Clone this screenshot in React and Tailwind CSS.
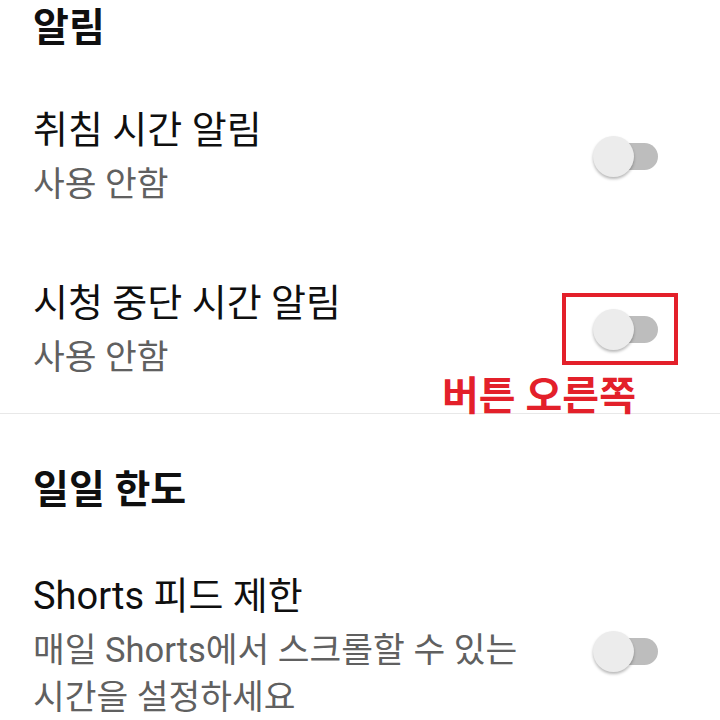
const font = { fontFamily: 'Roboto, "Noto Sans CJK KR", sans-serif' }

function Toggle({ className = '' }) {
  return (
    <div className={`relative h-[41px] w-[65px] shrink-0 ${className}`}>
      <div className="absolute right-0 top-[7px] h-[27px] w-[58px] rounded-full bg-[#bdbdbd]" />
      <div className="absolute left-0 top-0 h-[41px] w-[41px] rounded-full bg-[#ececec] shadow-[0_2px_3px_rgba(0,0,0,0.28)]" />
    </div>
  )
}

function SettingRow({ title, subtitle, className = '', toggleClass = '' }) {
  return (
    <div className={`flex items-center justify-between pl-[33px] pr-[62px] ${className}`}>
      <div className="min-w-0">
        <div className="text-[38px] leading-[52px] text-[#0f0f0f]">{title}</div>
        <div className="mt-[5px] max-w-[530px] break-keep text-[34.5px] leading-[47px] text-[#606060]">
          {subtitle}
        </div>
      </div>
      <Toggle className={toggleClass} />
    </div>
  )
}

function SectionTitle({ children }) {
  return (
    <h2 className="flex h-[56px] items-center pl-[33px] text-[39px] font-bold text-[#0f0f0f]">
      {children}
    </h2>
  )
}

export default function App() {
  return (
    <div className="relative h-[720px] w-[720px] overflow-hidden bg-white" style={font}>
      <section className="pb-[11px]">
        <SectionTitle>알림</SectionTitle>
        <SettingRow title="취침 시간 알림" subtitle="사용 안함" className="pt-[48px] pb-[21px]" />
        <SettingRow title="시청 중단 시간 알림" subtitle="사용 안함" className="pt-[48px] pb-[21px]" />
      </section>

      <div className="h-px bg-[#e8e8e8]" />

      <section className="pt-[48px]">
        <SectionTitle>일일 한도</SectionTitle>
        <SettingRow
          title="Shorts 피드 제한"
          subtitle="매일 Shorts에서 스크롤할 수 있는 시간을 설정하세요"
          className="pt-[52px]"
          toggleClass="mt-[12px]"
        />
      </section>

      {/* annotation overlay */}
      <div className="absolute left-[562px] top-[293px] h-[72px] w-[116px] border-4 border-[#e3202a]" />
      <div className="absolute left-[442px] top-[372px] text-[40px] font-bold leading-[50px] text-[#e3202a]">
        버튼 오른쪽
      </div>
    </div>
  )
}
